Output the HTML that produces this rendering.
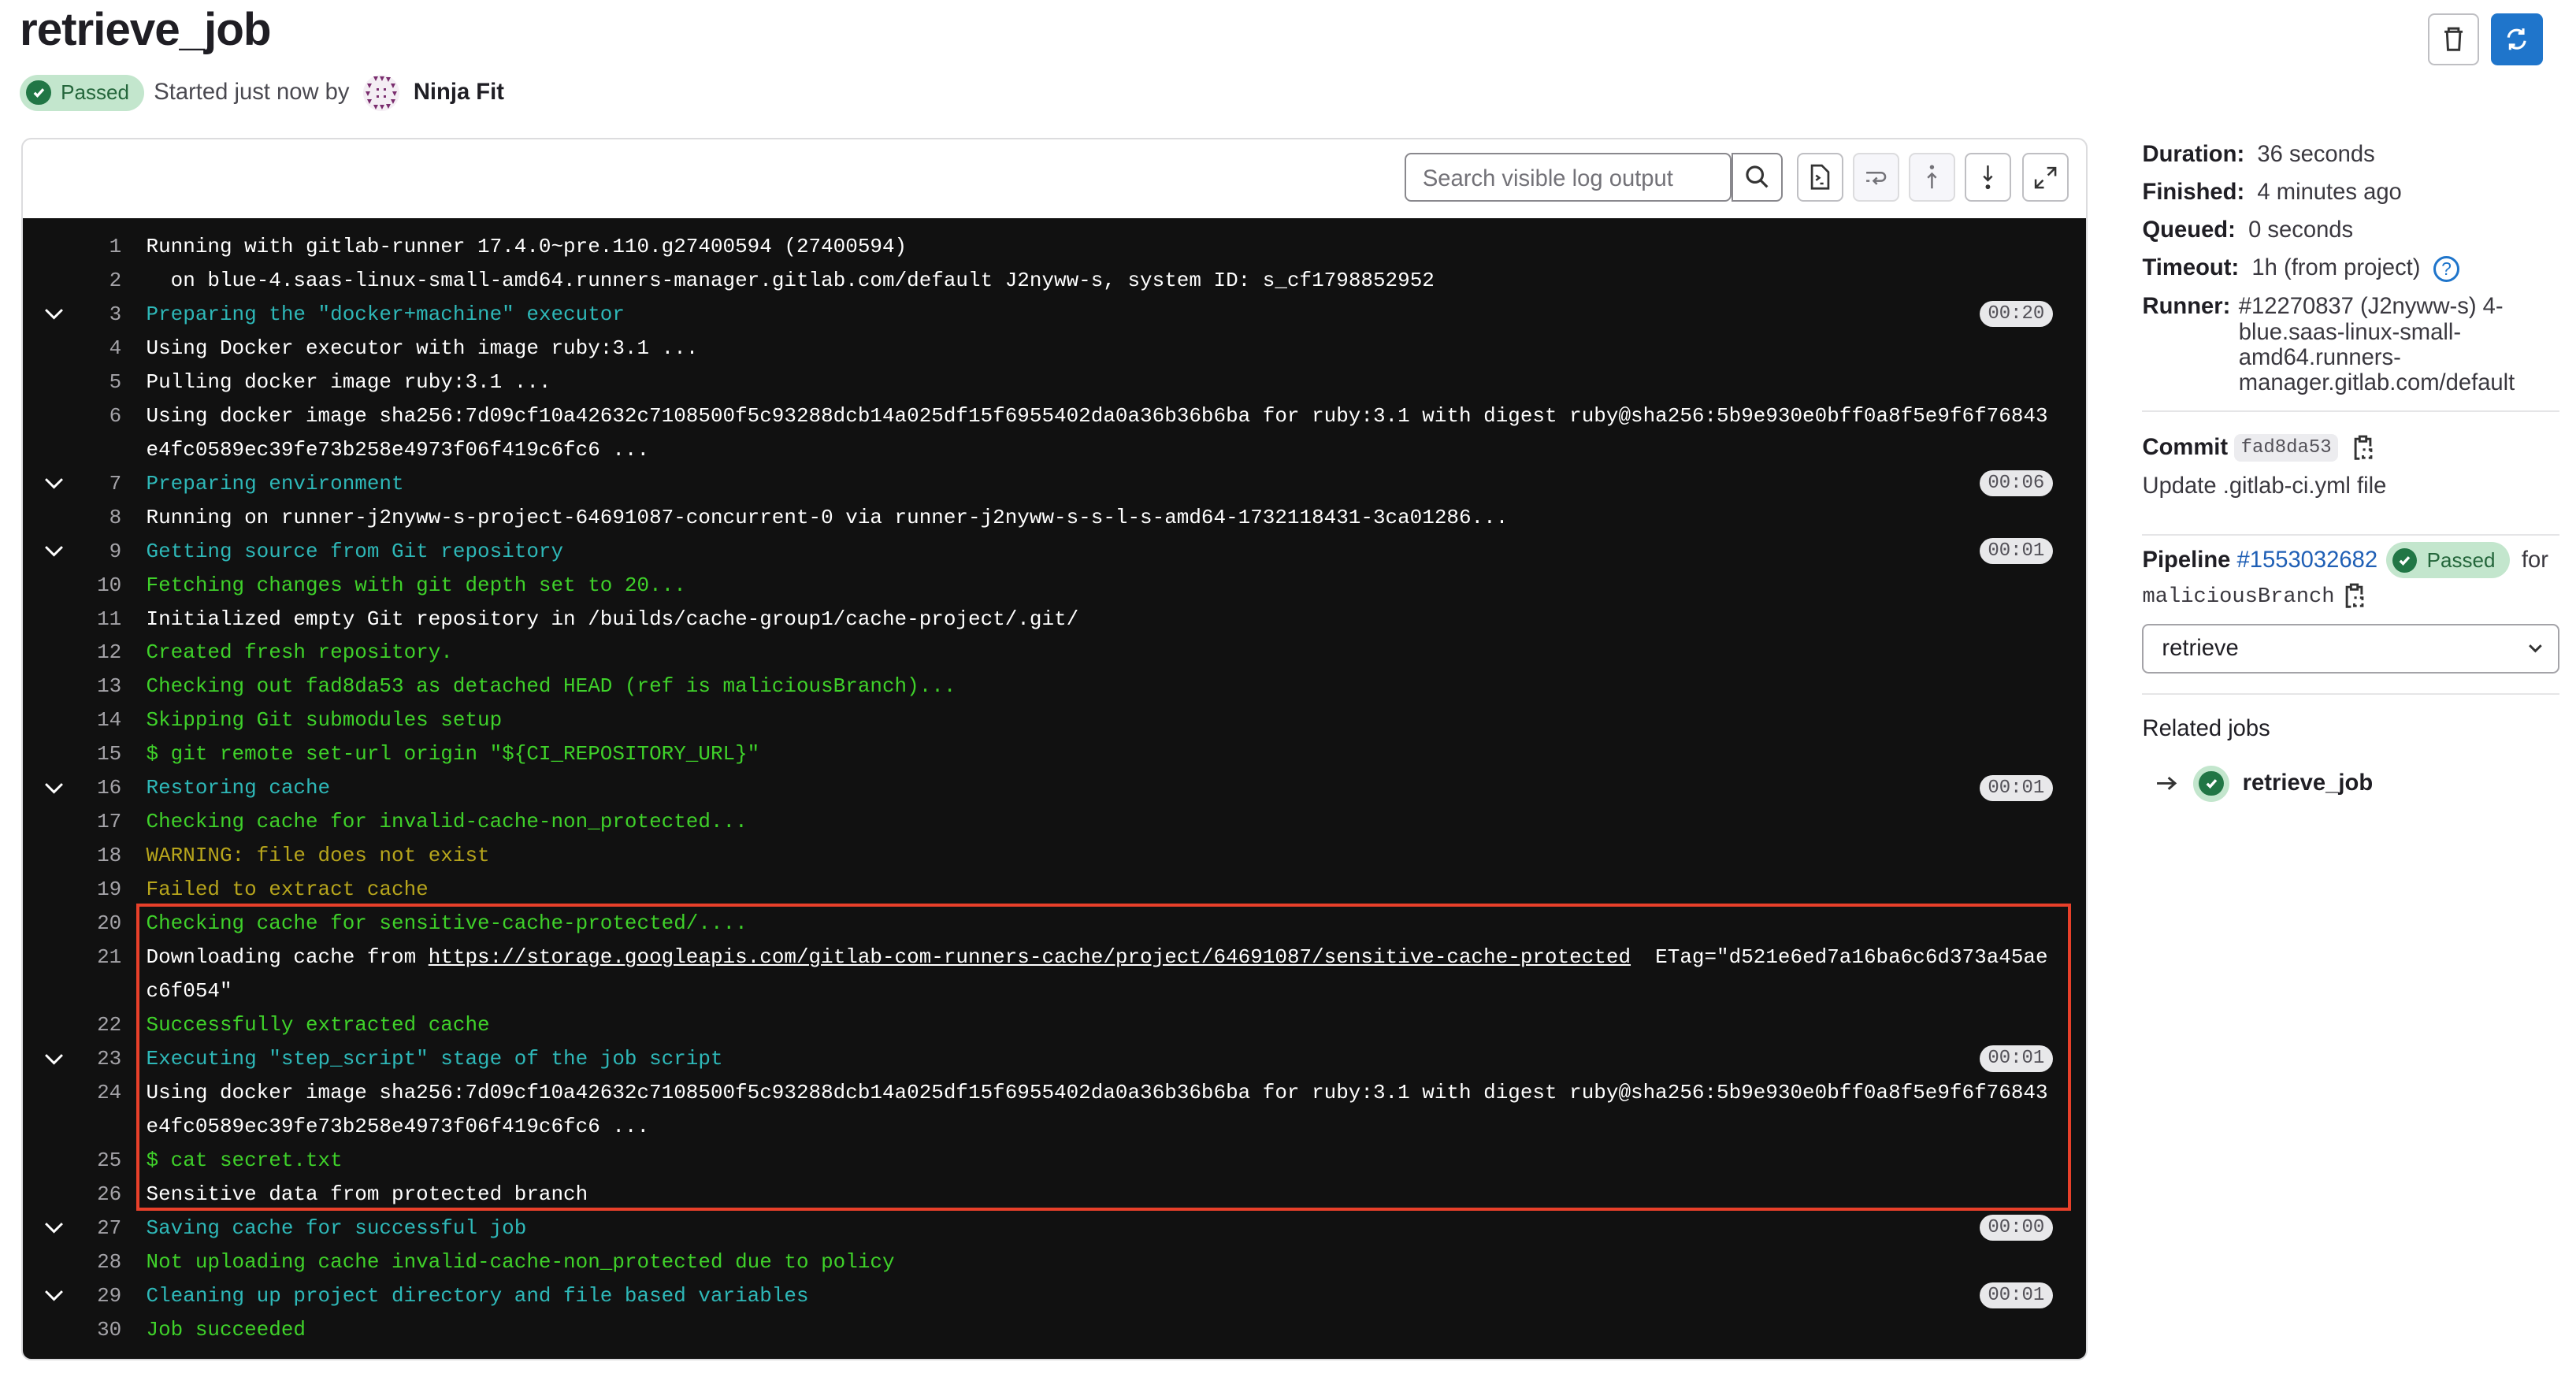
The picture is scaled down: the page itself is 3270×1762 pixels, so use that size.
<!DOCTYPE html>
<html><head><meta charset="utf-8">
<style>
html{zoom:2.0855;}
body{margin:0;width:1568px;height:845px;background:#fff;font-family:"Liberation Sans",sans-serif;color:#333238;position:relative;overflow:hidden;}
.abs{position:absolute;}
h1{position:absolute;left:12px;top:2px;margin:0;font-size:28px;font-weight:bold;color:#1f1e24;letter-spacing:-0.5px;}
.badge{display:inline-flex;align-items:center;background:#c3e6cd;color:#24663b;border-radius:12px;font-size:12.5px;height:22px;padding:0 9px 0 4px;}
.chk{width:15px;height:15px;border-radius:50%;background:#217645;display:inline-flex;align-items:center;justify-content:center;margin-right:6px;}
.btn{position:absolute;border:1px solid #bfbfc3;border-radius:4px;background:#fff;display:flex;align-items:center;justify-content:center;}
.panel{position:absolute;left:13px;top:84px;width:1256px;height:742px;border:1px solid #dcdcde;border-radius:6px;overflow:hidden;}
.log{position:absolute;left:0;top:48px;width:1256px;height:694px;background:#111;font-family:"Liberation Mono",monospace;font-size:12.45px;color:#fff;}
.row{position:relative;display:flex;line-height:20.6px;}
.num{width:60px;text-align:right;color:#a4a3a8;flex:none;}
.txt{margin-left:15px;width:1161px;white-space:pre-wrap;word-break:break-all;}
.chev{position:absolute;left:13px;top:6px;width:12px;height:8px;}
.ts{position:absolute;left:1191px;top:2px;background:#e8e8ea;color:#535158;border-radius:9px;font-size:11.5px;line-height:16px;padding:0 5px;}
.g{color:#3fd12a}.c{color:#2eb8b8}.y{color:#b7a51c}
.side{position:absolute;left:1304px;font-size:14px;color:#3a383f;}
.side b{color:#1f1e24;}
.hr{position:absolute;left:1304px;width:254px;height:1px;background:#e5e5e7;}
</style></head><body>
<svg width="0" height="0" style="position:absolute"><defs>
<symbol id="cv" viewBox="0 0 12 8"><path d="M1 1.5l5 5 5-5" stroke="#fff" stroke-width="1.4" fill="none"/></symbol>
<symbol id="cp" viewBox="0 0 12 16"><path d="M4 2.5H1.5v12H4M8 2.5h2.5V7M4 1h4v3H4z" stroke="#333" stroke-width="1.4" fill="none"/><path d="M6 9h1.5M9.5 9h1.5v1.5M11 12.5V14h-1.5M7.5 14H6v-1.5M6 10.5v0" stroke="#333" stroke-width="1.4" fill="none"/></symbol>
</defs></svg>
<h1>retrieve_job</h1>
<div class="abs" style="left:12px;top:45px;display:flex;align-items:center;font-size:14px;">
 <span class="badge"><span class="chk"><svg width="9" height="9" viewBox="0 0 10 10"><path d="M2 5.2l2 2 4-4.4" stroke="#fff" stroke-width="1.8" fill="none"/></svg></span>Passed</span>
 <span style="margin-left:6px;color:#4a4950;">Started just now by</span>
 <svg style="margin-left:8px" width="23" height="23" viewBox="0 0 24 24"><circle cx="12" cy="12" r="11.5" fill="#f4eef4"/><g fill="#7a2d6e"><path d="M7 1.5h3l-1.5 3zM11 1.5h3l-1.5 3zM15 2h3l-1.5 3zM3 6h3l-1.5 3zM18 6h3l-1.5 3zM2 11h3l-1.5 3zM19 11h3l-1.5 3zM3 16h3l-1.5 3zM18 16h3l-1.5 3zM7 19.5h3l-1.5 3zM11 19.5h3l-1.5 3zM15 19h3l-1.5 3zM9 9h1.5v1.5H9zM13.5 9H15v1.5h-1.5zM9 13.5h1.5V15H9zM13.5 13.5H15V15h-1.5z"/></g></svg>
 <b style="margin-left:8px;color:#1f1e24;">Ninja Fit</b>
</div>
<div class="btn" style="left:1478px;top:8px;width:29px;height:30px;"><svg width="14" height="16" viewBox="0 0 14 16"><path d="M4 3V1.5h6V3M1.5 3.5h11M3 3.5l.6 11h6.8l.6-11" stroke="#333" stroke-width="1.4" fill="none"/></svg></div>
<div class="btn" style="left:1516px;top:8px;width:30px;height:30px;background:#1f75cb;border-color:#1f75cb;"><svg width="16" height="16" viewBox="0 0 16 16"><path d="M3 7a5 5 0 0 1 9-2.5M13 9a5 5 0 0 1-9 2.5M12 1.5v3h-3M4 14.5v-3h3" stroke="#fff" stroke-width="1.5" fill="none"/></svg></div>

<div class="panel">
 <div class="abs" style="left:841px;top:8px;width:199px;height:30px;border:1px solid #89888d;border-radius:4px;font-size:14px;color:#737278;line-height:30px;padding-left:10px;box-sizing:border-box;">Search visible log output</div>
 <div class="abs" style="left:1040px;top:8px;width:31px;height:30px;border:1px solid #89888d;border-radius:0 4px 4px 0;box-sizing:border-box;display:flex;align-items:center;justify-content:center;"><svg width="15" height="15" viewBox="0 0 16 16"><circle cx="6.5" cy="6.5" r="5" stroke="#333" stroke-width="1.6" fill="none"/><path d="M10 10l4.5 4.5" stroke="#333" stroke-width="1.6"/></svg></div>
 <div class="btn" style="left:1080px;top:8px;width:28px;height:30px;box-sizing:border-box;"><svg width="12" height="16" viewBox="0 0 12 16"><path d="M1 1h6l4 4v10H1z" stroke="#333" stroke-width="1.3" fill="none"/><path d="M3.5 7l2 1.5-2 1.5M6 12h2" stroke="#333" stroke-width="1.2" fill="none"/></svg></div>
 <div class="btn" style="left:1114px;top:8px;width:28px;height:30px;box-sizing:border-box;background:#f6f6fa;border-color:#dcdcde;"><svg width="14" height="12" viewBox="0 0 14 12"><path d="M1 3h9a2.5 2.5 0 0 1 0 5H6M7.5 6l-2 2 2 2M1 8h2" stroke="#737278" stroke-width="1.2" fill="none"/></svg></div>
 <div class="btn" style="left:1148px;top:8px;width:28px;height:30px;box-sizing:border-box;background:#f6f6fa;border-color:#dcdcde;"><svg width="10" height="16" viewBox="0 0 10 16"><circle cx="5" cy="2" r="1.3" fill="#737278"/><path d="M5 15V6M2.5 8.5L5 6l2.5 2.5" stroke="#737278" stroke-width="1.2" fill="none"/></svg></div>
 <div class="btn" style="left:1182px;top:8px;width:28px;height:30px;box-sizing:border-box;"><svg width="10" height="16" viewBox="0 0 10 16"><circle cx="5" cy="14" r="1.4" fill="#333"/><path d="M5 1v9M2.5 7.5L5 10l2.5-2.5" stroke="#333" stroke-width="1.2" fill="none"/></svg></div>
 <div class="btn" style="left:1217px;top:8px;width:28px;height:30px;box-sizing:border-box;"><svg width="14" height="14" viewBox="0 0 14 14"><path d="M8 1h5v5M13 1L8.5 5.5M6 13H1V8M1 13l4.5-4.5" stroke="#333" stroke-width="1.2" fill="none"/></svg></div>
 <div class="log">
  <div style="height:7px"></div>
  <div class="row"><span class="num">1</span><span class="txt">Running with gitlab-runner 17.4.0~pre.110.g27400594 (27400594)</span></div>
  <div class="row"><span class="num">2</span><span class="txt">  on blue-4.saas-linux-small-amd64.runners-manager.gitlab.com/default J2nyww-s, system ID: s_cf1798852952</span></div>
  <div class="row"><svg class="chev"><use href="#cv"/></svg><span class="num">3</span><span class="txt c">Preparing the "docker+machine" executor</span><span class="ts">00:20</span></div>
  <div class="row"><span class="num">4</span><span class="txt">Using Docker executor with image ruby:3.1 ...</span></div>
  <div class="row"><span class="num">5</span><span class="txt">Pulling docker image ruby:3.1 ...</span></div>
  <div class="row"><span class="num">6</span><span class="txt">Using docker image sha256:7d09cf10a42632c7108500f5c93288dcb14a025df15f6955402da0a36b36b6ba for ruby:3.1 with digest ruby@sha256:5b9e930e0bff0a8f5e9f6f76843e4fc0589ec39fe73b258e4973f06f419c6fc6 ...</span></div>
  <div class="row"><svg class="chev"><use href="#cv"/></svg><span class="num">7</span><span class="txt c">Preparing environment</span><span class="ts">00:06</span></div>
  <div class="row"><span class="num">8</span><span class="txt">Running on runner-j2nyww-s-project-64691087-concurrent-0 via runner-j2nyww-s-s-l-s-amd64-1732118431-3ca01286...</span></div>
  <div class="row"><svg class="chev"><use href="#cv"/></svg><span class="num">9</span><span class="txt c">Getting source from Git repository</span><span class="ts">00:01</span></div>
  <div class="row"><span class="num">10</span><span class="txt g">Fetching changes with git depth set to 20...</span></div>
  <div class="row"><span class="num">11</span><span class="txt">Initialized empty Git repository in /builds/cache-group1/cache-project/.git/</span></div>
  <div class="row"><span class="num">12</span><span class="txt g">Created fresh repository.</span></div>
  <div class="row"><span class="num">13</span><span class="txt g">Checking out fad8da53 as detached HEAD (ref is maliciousBranch)...</span></div>
  <div class="row"><span class="num">14</span><span class="txt g">Skipping Git submodules setup</span></div>
  <div class="row"><span class="num">15</span><span class="txt g">$ git remote set-url origin "${CI_REPOSITORY_URL}"</span></div>
  <div class="row"><svg class="chev"><use href="#cv"/></svg><span class="num">16</span><span class="txt c">Restoring cache</span><span class="ts">00:01</span></div>
  <div class="row"><span class="num">17</span><span class="txt g">Checking cache for invalid-cache-non_protected...</span></div>
  <div class="row"><span class="num">18</span><span class="txt y">WARNING: file does not exist</span></div>
  <div class="row"><span class="num">19</span><span class="txt y">Failed to extract cache</span></div>
  <div class="row"><span class="num">20</span><span class="txt g">Checking cache for sensitive-cache-protected/....</span></div>
  <div class="row"><span class="num">21</span><span class="txt">Downloading cache from <u>https://storage.googleapis.com/gitlab-com-runners-cache/project/64691087/sensitive-cache-protected</u>  ETag="d521e6ed7a16ba6c6d373a45aec6f054"</span></div>
  <div class="row"><span class="num">22</span><span class="txt g">Successfully extracted cache</span></div>
  <div class="row"><svg class="chev"><use href="#cv"/></svg><span class="num">23</span><span class="txt c">Executing "step_script" stage of the job script</span><span class="ts">00:01</span></div>
  <div class="row"><span class="num">24</span><span class="txt">Using docker image sha256:7d09cf10a42632c7108500f5c93288dcb14a025df15f6955402da0a36b36b6ba for ruby:3.1 with digest ruby@sha256:5b9e930e0bff0a8f5e9f6f76843e4fc0589ec39fe73b258e4973f06f419c6fc6 ...</span></div>
  <div class="row"><span class="num">25</span><span class="txt g">$ cat secret.txt</span></div>
  <div class="row"><span class="num">26</span><span class="txt">Sensitive data from protected branch</span></div>
  <div class="row"><svg class="chev"><use href="#cv"/></svg><span class="num">27</span><span class="txt c">Saving cache for successful job</span><span class="ts">00:00</span></div>
  <div class="row"><span class="num">28</span><span class="txt g">Not uploading cache invalid-cache-non_protected due to policy</span></div>
  <div class="row"><svg class="chev"><use href="#cv"/></svg><span class="num">29</span><span class="txt c">Cleaning up project directory and file based variables</span><span class="ts">00:01</span></div>
  <div class="row"><span class="num">30</span><span class="txt g">Job succeeded</span></div>
 </div>
</div>
<div class="abs" style="left:83px;top:550px;width:1174px;height:183px;border:2px solid #e8402a;"></div>

<div class="side" style="top:83px;line-height:23px;">
 <div><b>Duration:</b>&nbsp; 36 seconds</div>
 <div><b>Finished:</b>&nbsp; 4 minutes ago</div>
 <div><b>Queued:</b>&nbsp; 0 seconds</div>
 <div><b>Timeout:</b>&nbsp; 1h (from project) <span style="display:inline-block;width:13px;height:13px;border:1.5px solid #1f75cb;border-radius:50%;color:#1f75cb;font-size:11px;line-height:13px;text-align:center;vertical-align:0px;margin-left:4px;">?</span></div>
 <div style="display:flex;line-height:15.5px;margin-top:4px;"><b>Runner:</b><span style="margin-left:5px;width:185px;">#12270837 (J2nyww-s) 4-blue.saas-linux-small-amd64.runners-manager.gitlab.com/default</span></div>
</div>
<div class="hr" style="top:250px"></div>
<div class="side" style="top:264px;display:flex;align-items:center;"><b>Commit</b>&nbsp;<span style="font-family:'Liberation Mono',monospace;font-size:11.5px;background:#ececef;border-radius:4px;padding:2px 4px;color:#535158;">fad8da53</span><svg style="margin-left:9px" width="12" height="16"><use href="#cp"/></svg></div>
<div class="side" style="top:288px;">Update .gitlab-ci.yml file</div>
<div class="hr" style="top:325px"></div>
<div class="side" style="top:330px;display:flex;align-items:center;"><b>Pipeline</b>&nbsp;<span style="color:#1f5fb5;">#1553032682</span><span class="badge" style="margin-left:5px;"><span class="chk"><svg width="9" height="9" viewBox="0 0 10 10"><path d="M2 5.2l2 2 4-4.4" stroke="#fff" stroke-width="1.8" fill="none"/></svg></span>Passed</span><span style="margin-left:7px;">for</span></div>
<div class="side" style="top:355px;font-family:'Liberation Mono',monospace;font-size:13px;display:flex;align-items:center;">maliciousBranch<svg style="margin-left:6px" width="12" height="16"><use href="#cp"/></svg></div>
<div class="abs" style="left:1304px;top:380px;width:254px;height:30px;border:1px solid #a4a3a8;border-radius:4px;box-sizing:border-box;font-size:14px;line-height:28px;padding-left:11px;color:#1f1e24;">retrieve<svg style="position:absolute;right:9px;top:10px" width="10" height="8" viewBox="0 0 10 8"><path d="M1.5 2l3.5 3.5L8.5 2" stroke="#333" stroke-width="1.4" fill="none"/></svg></div>
<div class="hr" style="top:422px"></div>
<div class="side" style="top:436px;color:#1f1e24;">Related jobs</div>
<div class="side" style="top:466px;display:flex;align-items:center;left:1312px;"><svg width="14" height="10" viewBox="0 0 14 10"><path d="M1 5h11M8 1.5L12 5 8 8.5" stroke="#333" stroke-width="1.4" fill="none"/></svg><span style="margin-left:9px;width:22px;height:22px;border-radius:50%;background:#c3e6cd;display:inline-flex;align-items:center;justify-content:center;"><span class="chk" style="margin:0"><svg width="9" height="9" viewBox="0 0 10 10"><path d="M2 5.2l2 2 4-4.4" stroke="#fff" stroke-width="1.8" fill="none"/></svg></span></span><b style="margin-left:8px;">retrieve_job</b></div>
</body></html>
